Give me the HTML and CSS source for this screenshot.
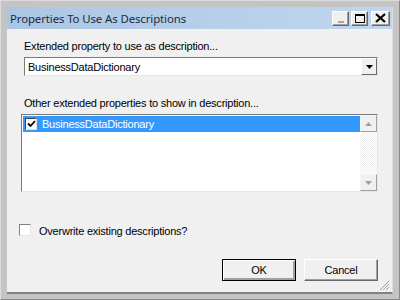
FILE: index.html
```html
<!DOCTYPE html>
<html>

<head>
    <title>Properties To Use As Descriptions</title>
    <link rel="stylesheet" href="styles.css">
</head>

<body>
    <div class="window">
        <div class="frame">
            <div class="titlebar">
                <span class="title">Properties To Use As Descriptions</span>
                <div class="caption-buttons">
                    <div class="cap-btn minimize"><span class="min-bar"></span></div>
                    <div class="cap-btn maximize"><span class="max-box"></span></div>
                    <div class="cap-btn close">
                        <svg width="11" height="10" viewBox="0 0 11 10">
                            <path d="M1 1 L10 9 M10 1 L1 9" stroke="#000" stroke-width="2.2" fill="none" />
                        </svg>
                    </div>
                </div>
            </div>

            <div class="content">
                <label class="field-label">Extended property to use as description...</label>
                <div class="combo">
                    <span class="combo-value">BusinessDataDictionary</span>
                    <div class="combo-button">
                        <svg width="7" height="4" viewBox="0 0 7 4"><path d="M0 0 H7 L3.5 4 Z" fill="#000" /></svg>
                    </div>
                </div>

                <label class="field-label second">Other extended properties to show in description...</label>
                <div class="listbox">
                    <div class="list-items">
                        <div class="list-row selected">
                            <span class="check checked">
                                <svg width="9" height="8" viewBox="0 0 9 8"><path d="M1 3.5 L3.5 6 L8 1" stroke="#000" stroke-width="1.8" fill="none" /></svg>
                            </span>
                            <span class="row-text">BusinessDataDictionary</span>
                        </div>
                    </div>
                    <div class="scrollbar">
                        <div class="scroll-btn">
                            <svg width="7" height="4" viewBox="0 0 7 4"><path d="M0 4 H7 L3.5 0 Z" fill="#a0a0a0" /></svg>
                        </div>
                        <div class="scroll-track"></div>
                        <div class="scroll-btn">
                            <svg width="7" height="4" viewBox="0 0 7 4"><path d="M0 0 H7 L3.5 4 Z" fill="#a0a0a0" /></svg>
                        </div>
                    </div>
                </div>

                <div class="overwrite">
                    <span class="check plain"></span>
                    <span class="overwrite-text">Overwrite existing descriptions?</span>
                </div>

                <div class="actions">
                    <button class="btn default">OK</button>
                    <button class="btn">Cancel</button>
                </div>

                <div class="grip">
                    <svg width="11" height="11" viewBox="0 0 11 11">
                        <path d="M10 1 L1 10 M10 4 L4 10 M10 7 L7 10" stroke="#a0a0a0" stroke-width="1" fill="none" />
                    </svg>
                </div>
            </div>
        </div>
    </div>
</body>

</html>
```

FILE: styles.css
```css
:root {
    --face: #f0f0f0;
    --frame: #c4c4c4;
    --shadow: #a0a0a0;
    --dark: #696969;
    --text: #000;
    --select: #3399ff;
}

* {
    box-sizing: border-box;
    margin: 0;
    padding: 0;
}

body {
    width: 400px;
    height: 300px;
    font-family: "Liberation Sans", Arial, sans-serif;
    font-size: 11px;
    letter-spacing: -0.22px;
    color: var(--text);
    background: #fff;
}

.window {
    width: 400px;
    height: 300px;
    background: var(--frame);
    border: 1px solid #dcdcdc;
    border-right-color: #8a8a8a;
    border-bottom-color: #8a8a8a;
    padding: 6px 6px 5px 6px;
}

.frame {
    height: 100%;
    display: flex;
    flex-direction: column;
    border-right: 1px solid #dedede;
    border-bottom: 2px solid #808080;
}

.titlebar {
    height: 22px;
    display: flex;
    align-items: center;
    justify-content: space-between;
    padding: 0 2px 0 3px;
    background: linear-gradient(to right, #abc6e4, #c0d6ee);
}

.title {
    font-family: "Noto Sans", "Open Sans", sans-serif;
    font-size: 11.4px;
    color: #1e2a3c;
    letter-spacing: -0.1px;
}

.caption-buttons {
    display: flex;
    gap: 2px;
}

.cap-btn {
    width: 17px;
    height: 15px;
    background: var(--face);
    border: 1px solid;
    border-color: #fff #696969 #696969 #fff;
    box-shadow: inset -1px -1px 0 #a0a0a0;
    display: flex;
    align-items: center;
    justify-content: center;
}

.cap-btn.close {
    width: 19px;
    margin-left: 1px;
}

.min-bar {
    width: 6px;
    height: 2px;
    background: #a8a8a8;
    margin-top: 7px;
}

.max-box {
    width: 10px;
    height: 9px;
    border: 1px solid #000;
    border-top-width: 2px;
}

.content {
    flex: 1;
    background: var(--face);
    display: flex;
    flex-direction: column;
    padding: 11px 14px 0 13px;
    position: relative;
}

.field-label {
    display: block;
    margin-left: 4px;
    height: 13px;
    line-height: 13px;
}

.field-label.second {
    margin-top: 21px;
}

.combo {
    margin: 4px 0 0 4px;
    height: 19px;
    background: #fff;
    border: 1px solid;
    border-color: #7a7a7a #e6e6e6 #e6e6e6 #7a7a7a;
    display: flex;
    align-items: center;
    justify-content: space-between;
}

.combo-value {
    padding-left: 3px;
}

.combo-button {
    width: 16px;
    height: 17px;
    background: var(--face);
    border: 1px solid;
    border-color: #fff #696969 #696969 #fff;
    display: flex;
    align-items: center;
    justify-content: center;
}

.listbox {
    margin: 4px 0 0 1px;
    height: 78px;
    background: #fff;
    border: 1px solid;
    border-color: #7a7a7a #e6e6e6 #e6e6e6 #7a7a7a;
    display: flex;
}

.list-items {
    flex: 1;
    padding: 1px 0 0 1px;
}

.list-row {
    height: 16px;
    display: flex;
    align-items: center;
}

.list-row.selected {
    background: var(--select);
}

.list-row.selected .row-text {
    color: #fff;
    padding-left: 5px;
}

.check {
    width: 12px;
    height: 12px;
    background: #fff;
    border: 1px solid;
    border-color: #808080 #dcdcdc #dcdcdc #808080;
    display: flex;
    align-items: center;
    justify-content: center;
}

.check.checked {
    margin-left: 2px;
    border-color: #404040 #e0e0e0 #e0e0e0 #404040;
}

.scrollbar {
    width: 17px;
    display: flex;
    flex-direction: column;
}

.scroll-btn {
    height: 17px;
    background: var(--face);
    border: 1px solid;
    border-color: #f4f4f4 #a0a0a0 #a0a0a0 #f4f4f4;
    display: flex;
    align-items: center;
    justify-content: center;
}

.scroll-track {
    flex: 1;
    background-color: #f6f6f6;
    background-image: repeating-conic-gradient(#ffffff 0 25%, #f0f0f0 0 50%);
    background-size: 2px 2px;
}

.overwrite {
    display: flex;
    align-items: center;
    gap: 8px;
    margin-top: 31px;
    margin-left: -1px;
}

.overwrite-text {
    margin-top: 2px;
}

.check.plain {
    border-color: #808080 #e6e6e6 #e6e6e6 #808080;
}

.actions {
    display: flex;
    justify-content: flex-end;
    gap: 8px;
    margin-top: 22px;
}

.btn {
    width: 74px;
    height: 22px;
    font-family: "Liberation Sans", Arial, sans-serif;
    font-size: 11px;
    letter-spacing: -0.22px;
    color: var(--text);
    background: var(--face);
    border: 1px solid;
    border-color: #fff #696969 #696969 #fff;
    box-shadow: inset -1px -1px 0 #a0a0a0;
}

.btn.default {
    border: 1px solid #000;
    box-shadow: inset 1px 1px 0 #fff, inset -2px -2px 0 #a0a0a0;
}

.grip {
    position: absolute;
    right: 2px;
    bottom: 1px;
    line-height: 0;
}
```
